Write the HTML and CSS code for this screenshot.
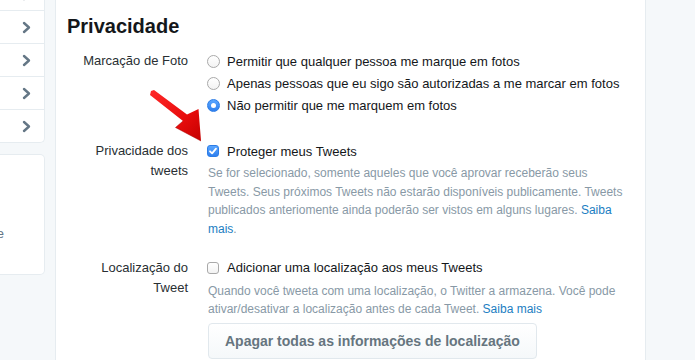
FILE: index.html
```html
<!DOCTYPE html>
<html lang="pt-BR">
<head>
<meta charset="utf-8">
<title>Privacidade</title>
<link rel="stylesheet" href="styles.css">
</head>
<body>
<div class="page">
  <aside class="side">
    <div class="card nav">
      <div class="nav-row"><svg class="chev" width="9" height="13" viewBox="0 0 9 13"><polyline points="2,2 7,6.5 2,11"/></svg></div>
      <div class="nav-row"><svg class="chev" width="9" height="13" viewBox="0 0 9 13"><polyline points="2,2 7,6.5 2,11"/></svg></div>
      <div class="nav-row"><svg class="chev" width="9" height="13" viewBox="0 0 9 13"><polyline points="2,2 7,6.5 2,11"/></svg></div>
      <div class="nav-row"><svg class="chev" width="9" height="13" viewBox="0 0 9 13"><polyline points="2,2 7,6.5 2,11"/></svg></div>
      <div class="nav-row"><svg class="chev" width="9" height="13" viewBox="0 0 9 13"><polyline points="2,2 7,6.5 2,11"/></svg></div>
    </div>
    <div class="card info">
      <div class="info-line"><span>Termos de Serviço Cookies de</span></div>
    </div>
  </aside>

  <main class="panel">
    <h1 class="title">Privacidade</h1>

    <div class="row row-photo">
      <div class="label label-offset">Marcação de Foto</div>
      <div class="ctrl">
        <div class="opt"><span class="radio"></span>Permitir que qualquer pessoa me marque em fotos</div>
        <div class="opt"><span class="radio"></span>Apenas pessoas que eu sigo são autorizadas a me marcar em fotos</div>
        <div class="opt"><span class="radio radio-on"></span>Não permitir que me marquem em fotos</div>
      </div>
    </div>

    <div class="row row-protect">
      <div class="label">Privacidade dos<br>tweets</div>
      <div class="ctrl">
        <div class="check-line"><span class="box box-on"><svg width="12" height="12" viewBox="0 0 12 12"><polyline points="3,6.3 5.1,8.4 9,3.6"/></svg></span>Proteger meus Tweets</div>
        <p class="desc desc-protect">Se for selecionado, somente aqueles que você aprovar receberão seus<br>Tweets. Seus próximos Tweets não estarão disponíveis publicamente. Tweets<br>publicados anteriomente ainda poderão ser vistos em alguns lugares. <a href="#" class="link">Saiba</a><br><a href="#" class="link">mais</a>.</p>
      </div>
    </div>

    <div class="row row-location">
      <div class="label">Localização do<br>Tweet</div>
      <div class="ctrl">
        <div class="check-line"><span class="box"></span>Adicionar uma localização aos meus Tweets</div>
        <p class="desc desc-location">Quando você tweeta com uma localização, o Twitter a armazena. Você pode<br>ativar/desativar a localização antes de cada Tweet. <a href="#" class="link">Saiba mais</a></p>
        <button class="btn" type="button">Apagar todas as informações de localização</button>
      </div>
    </div>
  </main>

  <div class="rest"></div>
</div>

<svg class="arrow" width="695" height="360" viewBox="0 0 695 360">
  <defs>
    <linearGradient id="ar" x1="0" y1="0" x2="1" y2="1">
      <stop offset="0" stop-color="#ff2a2a"/>
      <stop offset="0.6" stop-color="#e80c0c"/>
      <stop offset="1" stop-color="#c40000"/>
    </linearGradient>
  </defs>
  <polygon points="151,91 154,90 187,114.5 198.5,109 201,141 175.5,127.5 183,121 150,95" fill="url(#ar)"/>
  <polyline points="183,121 175.5,127.5 201,141" fill="none" stroke="#a80000" stroke-width="1" opacity="0.5"/>
</svg>
</body>
</html>
```

FILE: styles.css
```css
html, body {
  margin: 0;
  padding: 0;
}

body {
  background: #f5f8fa;
  font-family: "Liberation Sans", Arial, "Helvetica Neue", sans-serif;
  color: #14171a;
  position: relative;
  overflow: hidden;
}

.page {
  display: flex;
  height: 360px;
  overflow: hidden;
}

/* ---- left column ---- */
.side {
  width: 45px;
  flex: none;
  margin-right: 10px;
}

.card {
  background: #fff;
  border: 1px solid #e6ecf0;
  border-left: 0;
  border-radius: 0 5px 5px 0;
  overflow: hidden;
}

.nav {
  margin-top: -22px;
  border-top: 0;
}

.nav-row {
  height: 32px;
  display: flex;
  align-items: center;
  justify-content: flex-end;
  padding-right: 13px;
  border-bottom: 1px solid #e6ecf0;
}

.nav-row:last-child {
  border-bottom: 0;
}

.chev polyline {
  fill: none;
  stroke: #657786;
  stroke-width: 2.4;
  stroke-linecap: round;
  stroke-linejoin: round;
}

.info {
  margin-top: 11px;
  height: 119px;
  box-sizing: content-box;
}

.info-line {
  display: flex;
  justify-content: flex-end;
  white-space: nowrap;
  padding-right: 40px;
  margin-top: 70px;
  font-size: 13px;
  line-height: 18px;
  color: #657786;
}

/* ---- main panel ---- */
.panel {
  width: 591px;
  box-sizing: border-box;
  flex: none;
  background: #fff;
  border-left: 1px solid #e6ecf0;
  border-right: 1px solid #e6ecf0;
  padding: 14px 0 0 11px;
}

.rest {
  flex: 1;
}

.title {
  margin: 0 0 12px;
  font-size: 20px;
  line-height: 24px;
  font-weight: bold;
  color: #14171a;
}

.row {
  display: grid;
  grid-template-columns: 121px 1fr;
  column-gap: 19px;
  font-size: 13px;
}

.row-photo {
  margin-bottom: 25px;
}

.row-protect {
  margin-bottom: 19px;
}

.label {
  text-align: right;
  line-height: 20px;
  color: #292f33;
}

.label-offset {
  padding-top: 1px;
}

.opt {
  display: flex;
  align-items: center;
  height: 22px;
  gap: 7px;
  white-space: nowrap;
}

.check-line {
  display: flex;
  align-items: center;
  height: 20px;
  gap: 8px;
  white-space: nowrap;
}

.radio {
  width: 13px;
  height: 13px;
  box-sizing: border-box;
  border: 1px solid #a9a9a9;
  border-radius: 50%;
  background: linear-gradient(#ffffff, #f3f3f3);
  flex: none;
  display: flex;
  align-items: center;
  justify-content: center;
}

.radio-on {
  border-color: #2d7de6;
  background: linear-gradient(#5aa6ff, #2f80ef);
}

.radio-on::after {
  content: "";
  width: 5px;
  height: 5px;
  border-radius: 50%;
  background: #fff;
}

.box {
  width: 12px;
  height: 12px;
  box-sizing: border-box;
  border: 1px solid #a9a9a9;
  border-radius: 3px;
  background: linear-gradient(#ffffff, #f3f3f3);
  flex: none;
  display: flex;
}

.box-on {
  border-color: #2d7de6;
  background: linear-gradient(#5aa6ff, #2f80ef);
}

.box-on svg {
  margin: -1px;
}

.box-on polyline {
  fill: none;
  stroke: #fff;
  stroke-width: 1.8;
  stroke-linecap: round;
  stroke-linejoin: round;
}

.desc {
  margin: 0;
  font-size: 12px;
  color: #8899a6;
  max-width: 440px;
  padding-left: 1px;
  white-space: nowrap;
}

.desc-protect {
  margin-top: 3px;
  line-height: 18.67px;
}

.desc-location {
  margin-top: 4px;
  line-height: 18px;
}

.link {
  color: #1b7ec2;
  text-decoration: none;
}

.btn {
  margin: 5px 0 0 1px;
  height: 36px;
  padding: 0 16px;
  border: 1px solid #e1e8ed;
  border-radius: 4px;
  background: linear-gradient(#ffffff, #f5f8fa);
  font-family: "Liberation Sans", Arial, sans-serif;
  font-size: 14px;
  font-weight: bold;
  color: #66757f;
  display: inline-flex;
  align-items: center;
  white-space: nowrap;
}

/* annotation overlay */
.arrow {
  position: absolute;
  left: 0;
  top: 0;
  pointer-events: none;
}
```
